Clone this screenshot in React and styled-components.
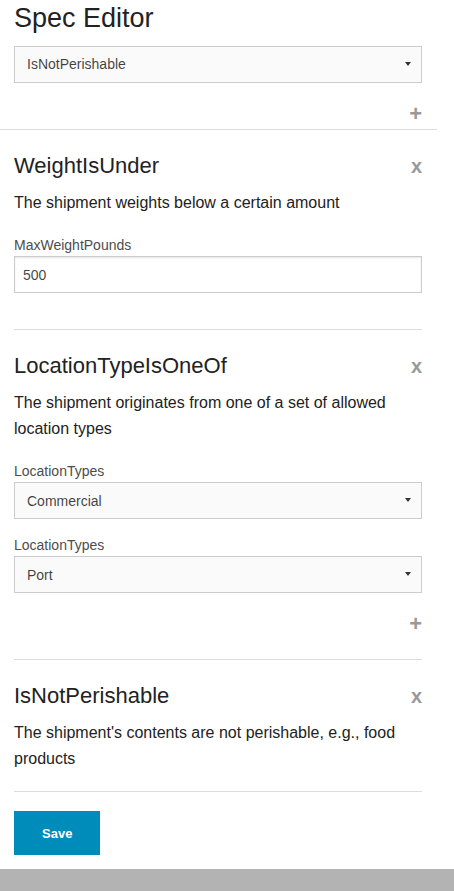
import React from 'react'
import styled, { createGlobalStyle } from 'styled-components'

const GlobalStyle = createGlobalStyle`
  html, body {
    margin: 0;
    padding: 0;
    background: #fff;
  }
  body {
    font-family: "Liberation Sans", Arial, Helvetica, sans-serif;
    color: #222;
  }
  * { box-sizing: border-box; }
`

const Page = styled.div`
  padding: 0 32px 0 14px;
`

const Title = styled.h2`
  font-size: 27px;
  line-height: 37.8px;
  font-weight: normal;
  margin: 0 0 8px;
  color: #222;
`

const TopRule = styled.hr`
  border: 0;
  border-top: 1px solid #ddd;
  margin: 0 -15px 19px -14px;
`

const SpecBlock = styled.div`
  display: flex;
  flex-direction: column;
`

const Rule = styled.hr`
  width: 100%;
  border: 0;
  border-top: 1px solid #ddd;
  margin: ${({ $flush }) => ($flush ? '0 0 19px' : '20px 0 19px')};
`

const SelectWrap = styled.div`
  position: relative;
  margin-bottom: 16px;
`

const Select = styled.select`
  appearance: none;
  width: 100%;
  height: 37px;
  padding: 0 24px 0 12px;
  border: 1px solid #ccc;
  border-radius: 0;
  background: #fafafa;
  font-family: inherit;
  font-size: 14px;
  color: rgba(0, 0, 0, 0.75);
  outline: none;
`

const Arrow = styled.svg`
  position: absolute;
  right: 11px;
  top: 16px;
  pointer-events: none;
`

const Input = styled.input`
  display: block;
  width: 100%;
  height: 37px;
  padding: 0 8px;
  border: 1px solid #ccc;
  border-radius: 0;
  background: #fff;
  font-family: inherit;
  font-size: 14px;
  color: rgba(0, 0, 0, 0.75);
  margin: 0 0 16px;
  box-shadow: inset 0 1px 2px rgba(0, 0, 0, 0.1);
  outline: none;
`

const AddRow = styled.div`
  display: flex;
  justify-content: flex-end;
  height: 30px;
  line-height: 30px;
`

const IconLink = styled.a`
  font-size: ${({ $size }) => $size}px;
  font-weight: bold;
  color: #999;
  text-decoration: none;
  cursor: pointer;
`

const SpecHead = styled.div`
  display: flex;
  justify-content: space-between;
  align-items: center;
  margin: 2px 0 8px;
  height: 30.8px;
`

const SpecName = styled.h3`
  font-size: 22px;
  line-height: 30.8px;
  font-weight: normal;
  margin: 0;
  color: #222;
`

const Description = styled.p`
  font-size: 16px;
  line-height: 25.6px;
  margin: 0 0 20px;
`

const Label = styled.label`
  display: block;
  font-size: 14px;
  line-height: 21px;
  color: #4d4d4d;
`

const SaveButton = styled.button`
  display: block;
  height: 44px;
  padding: 0 28px;
  border: 0;
  border-radius: 0;
  background: #008cba;
  color: #fff;
  font-family: inherit;
  font-size: 13px;
  font-weight: bold;
  cursor: pointer;
`

const Footer = styled.div`
  margin-top: 14px;
  height: 23px;
  background: #b3b3b3;
`

const specs = [
  {
    name: 'WeightIsUnder',
    description: 'The shipment weights below a certain amount',
    fields: [{ label: 'MaxWeightPounds', type: 'input', value: '500' }],
  },
  {
    name: 'LocationTypeIsOneOf',
    description: 'The shipment originates from one of a set of allowed location types',
    fields: [
      { label: 'LocationTypes', type: 'select', value: 'Commercial' },
      { label: 'LocationTypes', type: 'select', value: 'Port' },
    ],
    addable: true,
  },
  {
    name: 'IsNotPerishable',
    description: "The shipment's contents are not perishable, e.g., food products",
    fields: [],
  },
]

const options = ['Commercial', 'Residential', 'Port', 'Airport']
const specNames = ['IsNotPerishable', 'WeightIsUnder', 'LocationTypeIsOneOf']

function Dropdown({ value, choices }) {
  return (
    <SelectWrap>
      <Select defaultValue={value}>
        {choices.map((c) => (
          <option key={c}>{c}</option>
        ))}
      </Select>
      <Arrow width="6" height="4" viewBox="0 0 6 4">
        <path d="M0 0h6L3 4z" fill="#333" />
      </Arrow>
    </SelectWrap>
  )
}

function Spec({ spec }) {
  return (
    <SpecBlock>
      <SpecHead>
        <SpecName>{spec.name}</SpecName>
        <IconLink $size={20}>x</IconLink>
      </SpecHead>
      <Description>{spec.description}</Description>
      {spec.fields.map((f, i) => (
        <div key={i}>
          <Label>{f.label}</Label>
          {f.type === 'input' ? (
            <Input defaultValue={f.value} />
          ) : (
            <Dropdown value={f.value} choices={options} />
          )}
        </div>
      ))}
      {spec.addable && (
        <AddRow>
          <IconLink $size={22}>+</IconLink>
        </AddRow>
      )}
      <Rule $flush={spec.fields.length === 0} />
    </SpecBlock>
  )
}

export default function App() {
  return (
    <>
      <GlobalStyle />
      <Page>
        <Title>Spec Editor</Title>
        <Dropdown value="IsNotPerishable" choices={specNames} />
        <AddRow>
          <IconLink $size={22}>+</IconLink>
        </AddRow>
        <TopRule />
        {specs.map((s, i) => (
          <Spec key={i} spec={s} />
        ))}
        <SaveButton>Save</SaveButton>
      </Page>
      <Footer />
    </>
  )
}
